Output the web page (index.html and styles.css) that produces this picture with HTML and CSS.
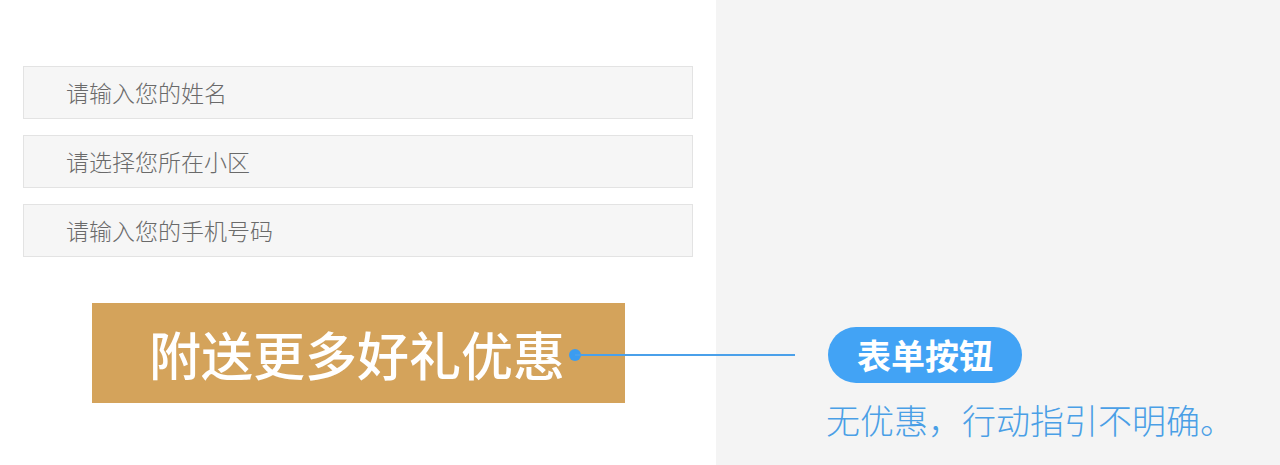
FILE: index.html
```html
<!DOCTYPE html>
<html lang="zh-CN">
<head>
    <meta charset="UTF-8">
    <meta name="viewport" content="width=device-width, initial-scale=1.0">
    <title>表单按钮</title>
    <link rel="stylesheet" href="styles.css">
</head>
<body>
    <div class="page">
        <div class="form-panel">
            <div class="field">请输入您的姓名</div>
            <div class="field">请选择您所在小区</div>
            <div class="field">请输入您的手机号码</div>
            <div class="submit-btn">
                <span>附送更多好礼优惠</span>
                <span class="pointer"></span>
            </div>
        </div>
        <div class="note-panel">
            <div class="tag">表单按钮</div>
            <p class="note">无优惠，行动指引不明确。</p>
        </div>
    </div>
</body>
</html>
```

FILE: styles.css
```css
body {
    margin: 0;
    font-family: "Noto Sans CJK SC", "Noto Sans", sans-serif;
    background-color: #fff;
}
.page {
    display: flex;
    height: 465px;
    overflow: hidden;
}
.form-panel {
    width: 716px;
    box-sizing: border-box;
    padding: 66px 0 0 23px;
    background-color: #fff;
}
.field {
    width: 670px;
    height: 53px;
    box-sizing: border-box;
    margin-bottom: 16px;
    padding-left: 42px;
    background-color: #f6f6f6;
    border: 1px solid #e3e3e3;
    color: #6a6a6a;
    font-size: 23px;
    font-weight: 300;
    line-height: 50px;
}
.submit-btn {
    position: relative;
    display: flex;
    align-items: center;
    width: 533px;
    height: 100px;
    box-sizing: border-box;
    margin: 46px 0 0 69px;
    padding-left: 57px;
    background-color: #d4a35b;
    color: #fff;
    font-size: 52px;
    font-weight: 500;
}
.pointer {
    position: absolute;
    left: 477px;
    top: 46px;
    width: 12px;
    height: 12px;
    border-radius: 50%;
    background-color: #3b9cf0;
}
.pointer::after {
    content: "";
    position: absolute;
    left: 6px;
    top: 5px;
    width: 220px;
    height: 2px;
    background-color: #4aa0ea;
}
.note-panel {
    flex: 1;
    box-sizing: border-box;
    padding: 327px 0 0 112px;
    background-color: #f4f4f4;
}
.tag {
    display: inline-block;
    height: 56px;
    padding: 0 29px;
    border-radius: 28px;
    background-color: #42a3f5;
    color: #fff;
    font-size: 34px;
    font-weight: bold;
    line-height: 56px;
}
.note {
    margin: 16px 0 0 -2px;
    color: #4a9fe6;
    font-size: 34px;
    font-weight: 300;
    line-height: 42px;
}
```
